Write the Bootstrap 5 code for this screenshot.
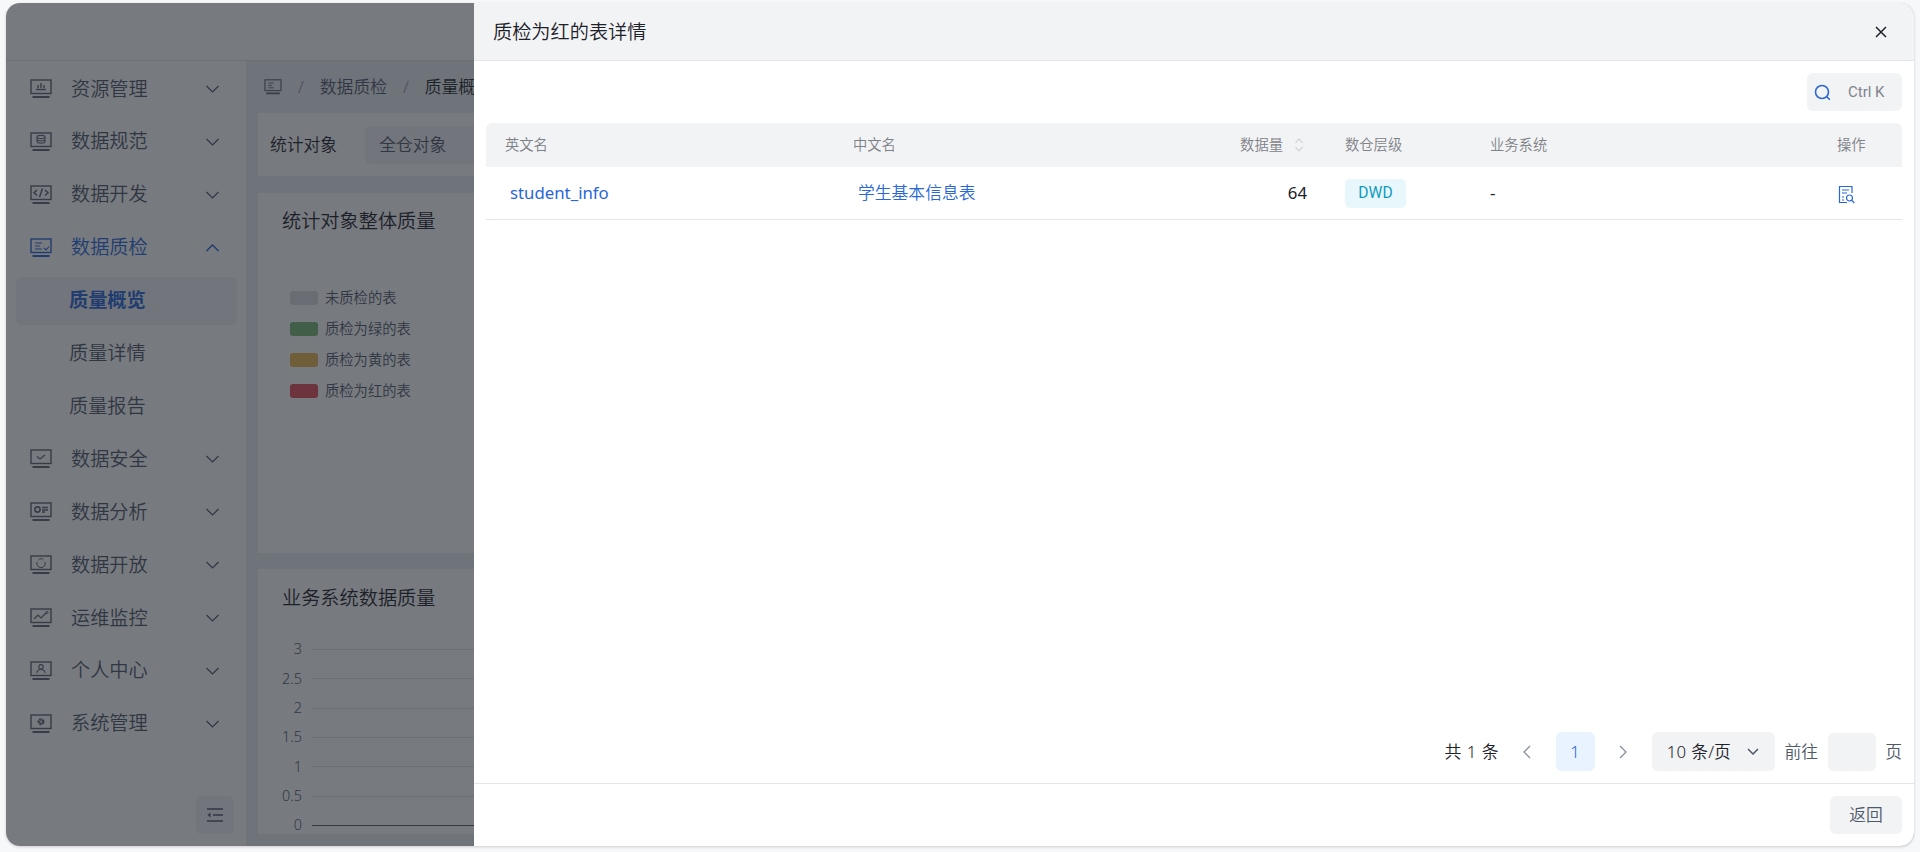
<!DOCTYPE html>
<html lang="zh-CN">
<head>
<meta charset="utf-8">
<title>质量概览</title>
<link href="https://cdn.jsdelivr.net/npm/bootstrap@5.3.0/dist/css/bootstrap.min.css" rel="stylesheet">
<style>
html,body{height:852px;overflow:hidden}
body{background:#f7f8fa;color:#1d2129;font-family:"Noto Sans","Noto Sans CJK SC",sans-serif;font-size:16.8px;font-weight:350}
.page-shell{height:852px;padding:3px 6px 6px}
.app-frame{border-radius:14px;overflow:hidden;background:#fff;box-shadow:0 1px 3px rgba(0,0,0,.18)}
.app-top{height:58px;flex:none;border-bottom:1px solid #e5e6eb}
.side{width:240px;flex:none;padding:4px 9px 0 10px}
.side-item{height:48px;margin-bottom:4.9px;padding:0 17px 0 14px;font-size:19.2px;color:#4e5969;border-radius:6px}
.side-icon{width:22px;height:20px;margin-right:19px;flex:none}
.side-item.on-blue{color:#2a67d6}
.side-sub{height:48px;margin-bottom:4.9px;padding-left:53px;font-size:19.2px;color:#4e5969;border-radius:6px}
.side-sub.current{background:#f2f3f8;color:#2a67d6;font-weight:700}
.fold-btn{width:38px;height:38px;background:#f2f3f5;border-radius:6px;margin:auto 3px 12px auto}
.main-area{background:#ebedf2;min-width:0}
.crumb{height:52px;padding-left:18px;font-size:16.8px;color:#4e5969}
.crumb-sep{margin:0 16px;color:#86909c}
.panel-white{background:#fff;margin:0 12px 0 12px}
.filter-bar{height:63px;padding:0 12px;margin-bottom:17px}
.filter-sel{height:38px;width:240px;margin-left:28px;padding-left:14px;background:#f2f3f5;border-radius:6px;color:#4e5969}
.overall{height:360px;margin-bottom:16px;padding:16px 24px}
.biz{height:265px;padding:17px 24px}
.panel-title{font-size:19.2px;line-height:24px;color:#1d2129}
.legend-list{margin-top:49px;padding-left:8px;font-size:14.3px;color:#4e5969}
.legend-row{height:31px}
.swatch{width:28px;height:14px;border-radius:3px;margin-right:7px}
.chart-wrap{margin-top:25px;margin-left:-24px;font-size:14.4px;color:#4e5969}
.chart-row{height:29.33px}
.y-label{width:44px;text-align:right;margin-right:10px;flex:none;line-height:1}
.y-line{flex:1;border-top:1px solid #dfe1e7}
.y-line.base{border-top-color:#5a5f68}
.mask-layer{position:absolute;inset:0;background:rgba(29,33,41,.6)}
.drawer-pane{position:absolute;top:0;right:0;bottom:0;width:1440px;background:#fff}
.drawer-head{height:58px;flex:none;background:#f2f3f5;border-bottom:1px solid #e5e6eb;padding:1px 19px 0;font-size:19.2px}
.drawer-body{padding:12px 12px 12px;min-height:0}
.ctrl-box{width:95px;height:38px;background:#f2f3f5;border-radius:6px;padding-left:7px;font-size:15px;color:#7f858d}
.ctrl-box span{margin-left:17px;font-family:"Roboto","Noto Sans",sans-serif;font-weight:400}
.data-table{table-layout:fixed;width:1416px;margin:12px 0 0}
.data-table th{height:44px;background:#f2f3f5;font-size:14.3px;font-weight:350;color:#7d8187;padding:0 0 0 19px;border:0;vertical-align:middle}
.data-table th:first-child{border-top-left-radius:6px}
.data-table th:last-child{border-top-right-radius:6px}
.data-table td{height:52px;padding:0 0 0 19px;border-bottom:1px solid #e5e6eb;vertical-align:middle;font-size:16.8px;color:#1d2129;font-weight:400}
.data-table .cell-link{color:#2a67d6;padding-left:24px}
.data-table .cell-link.zh{font-weight:350}
.data-table td.num-cell{text-align:right;padding:0 19px 0 0}
.data-table th.num-cell{text-align:right;padding:0 22px 0 0}
.sort-mark{margin-left:11px}
.dwd-tag{display:inline-block;width:61px;height:29px;margin-top:1px;line-height:29px;text-align:center;background:#e8f7fb;color:#0f9bbf;border-radius:5px;font-size:15.6px;font-family:"Roboto","Noto Sans",sans-serif}
.pager{gap:9.6px;font-size:16.8px;height:39px}
.pg-total{word-spacing:1px;margin-right:-1px}
.pg-arrow{width:39px;height:39px}
.pg-arrow.slim{width:38px}
.pg-now{width:39px;height:39px;background:#e8f3ff;color:#2a67d6;border-radius:6px}
.pg-size{width:123px;height:39px;background:#f2f3f5;border-radius:6px;padding:0 16px 0 15px;word-spacing:1px}
.pg-input{width:48px;height:38px;background:#f2f3f5;border-radius:6px}
.pg-muted{color:#4e5969}
.op-icon{margin-left:1px}
.drawer-foot{height:63px;flex:none;border-top:1px solid #e5e6eb;padding:12px}
.back-btn{width:72px;height:38px;padding:0;background:#f2f3f5;border:0;border-radius:6px;color:#4e5969;font-size:16.8px;font-weight:350}
</style>
</head>
<body>
<svg width="0" height="0" class="d-block" aria-hidden="true">
<defs>
<g id="mon" fill="none" stroke-width="1.4"><rect x="1" y="1" width="20" height="13.5"/><path d="M2.5 18h17" stroke-width="2"/></g>
</defs>
</svg>
<div class="page-shell">
<div class="app-frame position-relative h-100 d-flex flex-column">
  <div class="app-top"></div>
  <div class="d-flex flex-grow-1" style="min-height:0">
    <nav class="side d-flex flex-column">
      <div class="side-item d-flex align-items-center"><svg class="side-icon" viewBox="0 0 22 20" stroke="#5f6672"><use href="#mon"/><path d="M6 10.5h10M8 9V6M11 9V4M14 9V6" fill="none" stroke-width="1.4"/></svg><span class="flex-grow-1">资源管理</span><svg width="15" height="8" viewBox="0 0 14 8" fill="none" stroke="#4e5969" stroke-width="1.2"><path d="M1 1l6 6 6-6"/></svg></div>
      <div class="side-item d-flex align-items-center"><svg class="side-icon" viewBox="0 0 22 20" stroke="#5f6672"><use href="#mon"/><ellipse cx="11" cy="5" rx="4" ry="1.6" fill="none" stroke-width="1.1"/><path d="M7 5v4.5c0 1 1.8 1.7 4 1.7s4-.7 4-1.7V5M7 7.3c0 1 1.8 1.7 4 1.7s4-.7 4-1.7" fill="none" stroke-width="1.1"/></svg><span class="flex-grow-1">数据规范</span><svg width="15" height="8" viewBox="0 0 14 8" fill="none" stroke="#4e5969" stroke-width="1.2"><path d="M1 1l6 6 6-6"/></svg></div>
      <div class="side-item d-flex align-items-center"><svg class="side-icon" viewBox="0 0 22 20" stroke="#5f6672"><use href="#mon"/><path d="M7 5L4 7.8l3 2.7M15 5l3 2.8-3 2.7M12.5 3.5l-3 8.5" fill="none" stroke-width="1.5"/></svg><span class="flex-grow-1">数据开发</span><svg width="15" height="8" viewBox="0 0 14 8" fill="none" stroke="#4e5969" stroke-width="1.2"><path d="M1 1l6 6 6-6"/></svg></div>
      <div class="side-item on-blue d-flex align-items-center"><svg class="side-icon" viewBox="0 0 22 20" stroke="#2a67d6"><use href="#mon"/><path d="M5 5h7M5 8h5M5 11h7M14 10l2 2 3-3.5" fill="none" stroke-width="1.1"/></svg><span class="flex-grow-1">数据质检</span><svg width="15" height="8" viewBox="0 0 14 8" fill="none" stroke="#2a67d6" stroke-width="1.5"><path d="M1 7l6-6 6 6"/></svg></div>
      <div class="side-sub current d-flex align-items-center">质量概览</div>
      <div class="side-sub d-flex align-items-center">质量详情</div>
      <div class="side-sub d-flex align-items-center">质量报告</div>
      <div class="side-item d-flex align-items-center"><svg class="side-icon" viewBox="0 0 22 20" stroke="#5f6672"><use href="#mon"/><path d="M7 7.5l3 2.5 5-4" fill="none" stroke-width="1.3"/></svg><span class="flex-grow-1">数据安全</span><svg width="15" height="8" viewBox="0 0 14 8" fill="none" stroke="#4e5969" stroke-width="1.2"><path d="M1 1l6 6 6-6"/></svg></div>
      <div class="side-item d-flex align-items-center"><svg class="side-icon" viewBox="0 0 22 20" stroke="#5f6672"><use href="#mon"/><circle cx="7.5" cy="7.5" r="2.6" fill="none" stroke-width="1.6"/><path d="M12 5.5h6M12 8h6M12 10h3" stroke-width="1.6"/></svg><span class="flex-grow-1">数据分析</span><svg width="15" height="8" viewBox="0 0 14 8" fill="none" stroke="#4e5969" stroke-width="1.2"><path d="M1 1l6 6 6-6"/></svg></div>
      <div class="side-item d-flex align-items-center"><svg class="side-icon" viewBox="0 0 22 20" stroke="#5f6672"><use href="#mon"/><path d="M8.5 5a3 3 0 0 1 5 0M7 7a4 4 0 0 0 2 5M15 7a4 4 0 0 1-2 5M9 12.2a4 4 0 0 0 4 0" fill="none" stroke-width="1"/></svg><span class="flex-grow-1">数据开放</span><svg width="15" height="8" viewBox="0 0 14 8" fill="none" stroke="#4e5969" stroke-width="1.2"><path d="M1 1l6 6 6-6"/></svg></div>
      <div class="side-item d-flex align-items-center"><svg class="side-icon" viewBox="0 0 22 20" stroke="#5f6672"><use href="#mon"/><path d="M4 11l4-4 3 3 5-5" fill="none" stroke-width="1.2"/><circle cx="17" cy="4.5" r="1.1" fill="none"/></svg><span class="flex-grow-1">运维监控</span><svg width="15" height="8" viewBox="0 0 14 8" fill="none" stroke="#4e5969" stroke-width="1.2"><path d="M1 1l6 6 6-6"/></svg></div>
      <div class="side-item d-flex align-items-center"><svg class="side-icon" viewBox="0 0 22 20" stroke="#5f6672"><use href="#mon"/><circle cx="11" cy="5.8" r="2.2" fill="none" stroke-width="1.1"/><path d="M7 12c0-2.5 1.8-3.5 4-3.5s4 1 4 3.5" fill="none" stroke-width="1.1"/></svg><span class="flex-grow-1">个人中心</span><svg width="15" height="8" viewBox="0 0 14 8" fill="none" stroke="#4e5969" stroke-width="1.2"><path d="M1 1l6 6 6-6"/></svg></div>
      <div class="side-item d-flex align-items-center"><svg class="side-icon" viewBox="0 0 22 20" stroke="#5f6672"><use href="#mon"/><circle cx="11" cy="7.7" r="2.2" fill="none" stroke-width="2.6" stroke-dasharray="2 .6"/></svg><span class="flex-grow-1">系统管理</span><svg width="15" height="8" viewBox="0 0 14 8" fill="none" stroke="#4e5969" stroke-width="1.2"><path d="M1 1l6 6 6-6"/></svg></div>
      <div class="fold-btn d-flex align-items-center justify-content-center"><svg width="16" height="14" viewBox="0 0 16 14" fill="none" stroke="#4e5969" stroke-width="1.6"><path d="M0 1h16M6 7h10M0 13h16"/><path d="M3.5 4.5L0.5 7l3 2.5z" fill="#4e5969" stroke="none"/></svg></div>
    </nav>
    <main class="main-area flex-grow-1">
      <div class="crumb d-flex align-items-center"><svg width="18" height="16" viewBox="0 0 22 20" stroke="#5f6672"><use href="#mon"/><path d="M5 5h7M5 8h5M5 11h7" fill="none" stroke-width="1.1"/></svg><span class="crumb-sep">/</span><span>数据质检</span><span class="crumb-sep">/</span><span class="text-dark">质量概览</span></div>
      <div class="panel-white filter-bar d-flex align-items-center"><span>统计对象</span><div class="filter-sel d-flex align-items-center">全仓对象</div></div>
      <div class="panel-white overall">
        <div class="panel-title">统计对象整体质量</div>
        <div class="legend-list">
          <div class="legend-row d-flex align-items-center"><span class="swatch" style="background:#dfe0e3"></span>未质检的表</div>
          <div class="legend-row d-flex align-items-center"><span class="swatch" style="background:#78b878"></span>质检为绿的表</div>
          <div class="legend-row d-flex align-items-center"><span class="swatch" style="background:#ecb850"></span>质检为黄的表</div>
          <div class="legend-row d-flex align-items-center"><span class="swatch" style="background:#e8505a"></span>质检为红的表</div>
        </div>
      </div>
      <div class="panel-white biz">
        <div class="panel-title">业务系统数据质量</div>
        <div class="chart-wrap">
          <div class="chart-row d-flex align-items-center"><span class="y-label">3</span><span class="y-line"></span></div>
          <div class="chart-row d-flex align-items-center"><span class="y-label">2.5</span><span class="y-line"></span></div>
          <div class="chart-row d-flex align-items-center"><span class="y-label">2</span><span class="y-line"></span></div>
          <div class="chart-row d-flex align-items-center"><span class="y-label">1.5</span><span class="y-line"></span></div>
          <div class="chart-row d-flex align-items-center"><span class="y-label">1</span><span class="y-line"></span></div>
          <div class="chart-row d-flex align-items-center"><span class="y-label">0.5</span><span class="y-line"></span></div>
          <div class="chart-row d-flex align-items-center"><span class="y-label">0</span><span class="y-line base"></span></div>
        </div>
      </div>
    </main>
  </div>
  <div class="mask-layer"></div>
  <aside class="drawer-pane d-flex flex-column">
    <div class="drawer-head d-flex align-items-center justify-content-between"><span>质检为红的表详情</span><svg width="12" height="12" viewBox="0 0 12 12" fill="none" stroke="#1d2129" stroke-width="1.5" class="me-2"><path d="M1 1l10 10M11 1L1 11"/></svg></div>
    <div class="drawer-body flex-grow-1 d-flex flex-column">
      <div class="d-flex justify-content-end"><div class="ctrl-box d-flex align-items-center"><svg width="17" height="17" viewBox="0 0 17 17" fill="none" stroke="#2a67d6" stroke-width="1.6"><circle cx="8" cy="8" r="6.5"/><path d="M12.8 12.8l3 3"/></svg><span>Ctrl K</span></div></div>
      <table class="table data-table">
        <colgroup><col style="width:348px"><col style="width:266px"><col style="width:226px"><col style="width:145px"><col style="width:347px"><col style="width:84px"></colgroup>
        <thead><tr><th>英文名</th><th>中文名</th><th class="num-cell"><span class="d-inline-flex align-items-center">数据量<svg class="sort-mark" width="10" height="16" viewBox="0 0 10 16" fill="none" stroke="#c9cdd4" stroke-width="1.1"><path d="M1.5 6L5 2l3.5 4M1.5 10L5 14l3.5-4"/></svg></span></th><th>数仓层级</th><th>业务系统</th><th>操作</th></tr></thead>
        <tbody><tr><td class="cell-link">student_info</td><td class="cell-link zh">学生基本信息表</td><td class="num-cell">64</td><td><span class="dwd-tag">DWD</span></td><td>-</td><td><svg class="op-icon" width="18" height="19" viewBox="0 0 18 19" fill="none" stroke="#2a67d6" stroke-width="1.2"><path d="M14 8V1.5H1.5v16H9"/><path d="M4 5h7M4 8h5M4 12h2M4 15h2"/><circle cx="11.5" cy="13" r="3"/><path d="M13.8 15.3l2.5 2.7"/></svg></td></tr></tbody>
      </table>
      <div class="pager d-flex align-items-center justify-content-end mt-auto">
        <span class="pg-total">共 1 条</span>
        <span class="pg-arrow d-flex align-items-center justify-content-center"><svg width="8" height="14" viewBox="0 0 8 14" fill="none" stroke="#86909c" stroke-width="1.3"><path d="M7 1L1 7l6 6"/></svg></span>
        <span class="pg-now d-flex align-items-center justify-content-center">1</span>
        <span class="pg-arrow slim d-flex align-items-center justify-content-center"><svg width="8" height="14" viewBox="0 0 8 14" fill="none" stroke="#86909c" stroke-width="1.3"><path d="M1 1l6 6-6 6"/></svg></span>
        <span class="pg-size d-flex align-items-center justify-content-between"><span>10 条/页</span><svg width="12" height="7" viewBox="0 0 12 7" fill="none" stroke="#4e5969" stroke-width="1.5"><path d="M1 1l5 5 5-5"/></svg></span>
        <span class="pg-muted">前往</span>
        <span class="pg-input"></span>
        <span class="pg-muted">页</span>
      </div>
    </div>
    <div class="drawer-foot d-flex justify-content-end"><button type="button" class="btn back-btn">返回</button></div>
  </aside>
</div>
</div>
</body>
</html>
